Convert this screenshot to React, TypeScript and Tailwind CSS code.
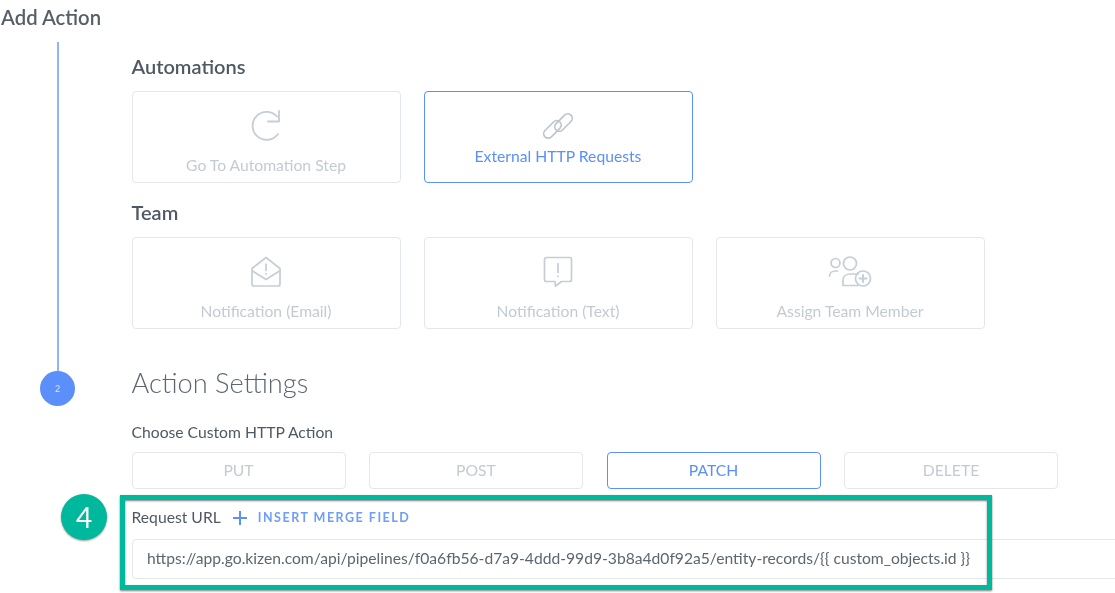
import React from 'react';

const StepIcon = () => (
  <svg width="34" height="34" viewBox="0 0 34 34" fill="none" stroke="#c5ced6" strokeWidth="1.8" strokeLinecap="round" strokeLinejoin="round">
    <path d="M28 7.500A14 14 0 1 0 29 25" />
    <path d="M30 2v10.500H19" />
  </svg>
);

const LinkIcon = () => (
  <svg width="32" height="32" viewBox="0 0 32 32" fill="none" stroke="#bcc6ce" strokeWidth="1.7">
    <rect x="-0.060" y="14.940" width="21" height="9" rx="4.500" transform="rotate(-45 10.440 19.440)" />
    <rect x="11.060" y="8.060" width="21" height="9" rx="4.500" transform="rotate(-45 21.560 12.560)" />
  </svg>
);

const EmailIcon = () => (
  <svg width="32" height="32" viewBox="0 0 32 32" fill="none" stroke="#c5ced6" strokeWidth="1.7" strokeLinecap="round" strokeLinejoin="round">
    <path d="M2 12.500 16 1.500l14 11V28a2 2 0 0 1-2 2H4a2 2 0 0 1-2-2z" />
    <path d="m2.500 15 13.500 8.500L29.500 15" />
    <path d="M16 8v6.500M16 17.500v.5" />
  </svg>
);

const ChatIcon = () => (
  <svg width="32" height="32" viewBox="0 0 32 32" fill="none" stroke="#c5ced6" strokeWidth="1.7" strokeLinecap="round" strokeLinejoin="round">
    <path d="M4.500 1.500h23a2 2 0 0 1 2 2v20a2 2 0 0 1-2 2h-8l-6 4.500-.5-4.500H4.500a2 2 0 0 1-2-2v-20a2 2 0 0 1 2-2z" />
    <path d="M16 7.500v9M16 20v.5" />
  </svg>
);

const TeamIcon = () => (
  <svg width="44" height="32" viewBox="0 0 44 32" fill="none" stroke="#c5ced6" strokeWidth="1.7" strokeLinecap="round" strokeLinejoin="round">
    <circle cx="7.500" cy="7" r="4.500" />
    <circle cx="22" cy="7.500" r="6.500" />
    <path d="M1.500 20c0-3 2.500-5 6-5h2" />
    <path d="M30 18h-7c-5 0-8 2.500-8 6v5.500h15" />
    <circle cx="35" cy="22.500" r="7.500" />
    <path d="M35 19v7M31.500 22.500h7" strokeWidth="2" />
  </svg>
);

type CardProps = {
  label: string;
  icon: React.ReactNode;
  active?: boolean;
};

const Card = ({ label, icon, active }: CardProps) => (
  <div
    className={`flex h-[92px] w-[269px] flex-col items-center rounded border ${
      active ? 'border-[#5b8ff9]' : 'border-[#e4e7ea]'
    }`}
  >
    <div className="mt-[18px] flex h-[32px] items-center justify-center">{icon}</div>
    <span
      className={`text-[15.700px] leading-[18px] ${
        active ? 'mt-[5px] text-[#5b8ff9]' : 'mt-[14px] text-[#c3cbd2]'
      }`}
    >
      {label}
    </span>
  </div>
);

const METHODS = ['PUT', 'POST', 'PATCH', 'DELETE'];

export default function App() {
  return (
    <div className="relative h-[593px] overflow-hidden bg-white font-['Lato',sans-serif] text-[#4f5963] blur-[0.7px]">
      <h1 className="pl-px pt-[6px] text-[20.300px] font-semibold leading-[22px] text-[#565f68]">Add Action</h1>

      <div className="mt-[14px] flex pl-[40px]">
        {/* stepper rail */}
        <div className="flex w-[35px] shrink-0 flex-col items-center">
          <div className="h-[329px] w-[2px] bg-[#8db3fb]" />
          <div className="flex h-[35px] w-[35px] items-center justify-center rounded-full bg-[#5b8ff9] text-[9px] text-[#dbe6fe]">
            2
          </div>
        </div>

        <div className="ml-[56.500px] w-[1010px] shrink-0">
          <h2 className="mt-[12px] text-[20px] font-semibold leading-[24px]">Automations</h2>
          <div className="mt-[13px] flex gap-[23px]">
            <Card label="Go To Automation Step" icon={<StepIcon />} />
            <Card label="External HTTP Requests" icon={<LinkIcon />} active />
          </div>

          <h2 className="mt-[17px] text-[20px] font-semibold leading-[24px]">Team</h2>
          <div className="mt-[13px] flex gap-[23px]">
            <Card label="Notification (Email)" icon={<EmailIcon />} />
            <Card label="Notification (Text)" icon={<ChatIcon />} />
            <Card label="Assign Team Member" icon={<TeamIcon />} />
          </div>

          <h2 className="mt-[36px] text-[27.200px] font-light leading-[36px] text-[#5c6670]">Action Settings</h2>
          <p className="mt-[22px] text-[15.700px] leading-[18px]">Choose Custom HTTP Action</p>

          <div className="mt-[11px] flex gap-[23.500px]">
            {METHODS.map(method => (
              <div
                key={method}
                className={`flex h-[37px] w-[214px] items-center justify-center rounded border text-[15.700px] ${
                  method === 'PATCH' ? 'border-[#5b8ff9] text-[#5b8ff9]' : 'border-[#e4e7ea] text-[#c3cbd2]'
                }`}
              >
                {method}
              </div>
            ))}
          </div>

          <div className="mt-[19px] flex h-[20px] items-center">
            <span className="text-[15.700px]">Request URL</span>
            <svg className="ml-[12px]" width="14" height="14" viewBox="0 0 14 14" stroke="#5b8ff9" strokeWidth="2">
              <path d="M7 0v14M0 7h14" />
            </svg>
            <span className="ml-[11px] text-[12.500px] font-bold tracking-[1.500px] text-[#6f9dfa]">INSERT MERGE FIELD</span>
          </div>

          <div className="mt-[10.500px] flex h-[40px] items-center rounded border border-[#e4e7ea] pl-[14.500px] text-[15.650px] text-[#5c6670]">
            https://app.go.kizen.com/api/pipelines/f0a6fb56-d7a9-4ddd-99d9-3b8a4d0f92a5/entity-records/{'{{ custom_objects.id }}'}
          </div>
        </div>
      </div>

      {/* annotation over the request url field */}
      <div className="absolute left-[120px] top-[495px] h-[95px] w-[872px] border-[5px] border-[#00b89c] shadow-[0_1px_2px_rgba(0,0,0,0.5),inset_0_1px_2px_rgba(0,0,0,0.5)]" />
      <div className="absolute left-[61px] top-[494px] flex h-[46px] w-[46px] items-center justify-center rounded-full bg-[#00b89c] text-[28px] text-white shadow-[0_1px_2px_rgba(0,0,0,0.4)]">
        4
      </div>
    </div>
  );
}
